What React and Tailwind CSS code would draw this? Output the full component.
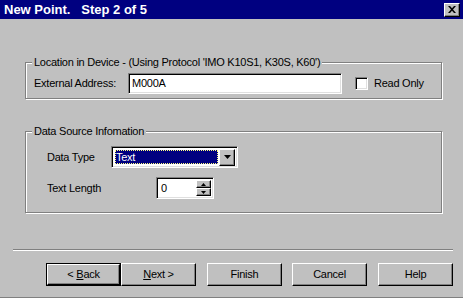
import React from 'react';

const raised =
  'bg-[#c0c0c0] border border-t-white border-l-white border-r-black border-b-black shadow-[inset_-1px_-1px_0_#808080]';
const sunken =
  'border border-t-[#808080] border-l-[#808080] border-r-white border-b-white shadow-[inset_1px_1px_0_#000,inset_-1px_-1px_0_#dfdfdf]';

const DownArrow = ({ small }) => (
  <svg width={small ? 5 : 7} height={small ? 3 : 4} viewBox={small ? '0 0 5 3' : '0 0 7 4'}>
    <path d={small ? 'M0 0h5L2.5 3z' : 'M0 0h7L3.5 4z'} fill="#000" />
  </svg>
);

const UpArrow = () => (
  <svg width="5" height="3" viewBox="0 0 5 3">
    <path d="M0 3h5L2.5 0z" fill="#000" />
  </svg>
);

const WizButton = ({ children, isDefault }) => (
  <div className={`w-[75px] h-[23px] ${isDefault ? 'border border-black' : ''}`}>
    <button className={`w-full h-full flex items-center justify-center ${raised}`}>
      {children}
    </button>
  </div>
);

const Group = ({ title, className, children }) => (
  <fieldset
    className={`border border-[#808080] shadow-[1px_1px_0_#fff,inset_1px_1px_0_#fff] ml-[12px] mr-[11px] ${className}`}
  >
    <legend className="ml-[6px] px-[2px] bg-[#c0c0c0] leading-[14px]">{title}</legend>
    {children}
  </fieldset>
);

export default function App() {
  return (
    <div className="w-[463px] h-[298px] bg-[#c0c0c0] flex flex-col border-b border-[#808080] font-['Liberation_Sans',Arial,sans-serif] text-[11px] tracking-[-0.25px] text-black overflow-hidden">
      {/* Title bar */}
      <div className="h-[19px] shrink-0 bg-[#000080] flex items-center justify-between pl-[4px] pr-[3px]">
        <span className="text-white font-bold text-[13px] tracking-normal whitespace-pre leading-none">New Point.   Step 2 of 5</span>
        <button className={`w-[16px] h-[14px] flex items-center justify-center ${raised}`}>
          <svg width="8" height="7" viewBox="0 0 8 7">
            <path d="M0 0h2l2 2.2L6 0h2L5 3.5 8 7H6L4 4.8 2 7H0l3-3.5z" fill="#000" />
          </svg>
        </button>
      </div>

      <div className="flex-1 flex flex-col pl-[13px] pr-[10px]">
        <Group
          title="Location in Device - (Using Protocol 'IMO K10S1, K30S, K60')"
          className="mt-[36px] h-[44px]"
        >
          <div className="flex items-center pl-[8px] pt-[4px]">
            <span className="w-[94px]">External Address:</span>
            <div className={`w-[214px] h-[21px] bg-white flex items-center px-[3px] ${sunken}`}>M000A</div>
            <div className={`ml-[13px] w-[13px] h-[13px] bg-white ${sunken}`} />
            <span className="ml-[6px]">Read Only</span>
          </div>
        </Group>

        <Group title="Data Source Infomation" className="mt-[25px] h-[89px]">
          <div className="flex flex-col pl-[21px] pt-[8px] gap-[9px]">
            <div className="flex items-center">
              <span className="w-[64px]">Data Type</span>
              <div className={`w-[127px] h-[22px] bg-white flex items-center p-[2px] ${sunken}`}>
                <div className="flex-1 h-full p-[1px]">
                  <div className="h-full bg-[#000080] text-white flex items-center pl-[1px] outline outline-1 outline-dotted outline-[#ffff80] -outline-offset-1">
                    Text
                  </div>
                </div>
                <div className={`w-[16px] h-[17px] flex items-center justify-center ${raised}`}>
                  <DownArrow />
                </div>
              </div>
            </div>
            <div className="flex items-center">
              <span className="w-[109px]">Text Length</span>
              <div className={`w-[58px] h-[22px] bg-white flex items-center p-[2px] ${sunken}`}>
                <span className="flex-1 pl-[2px]">0</span>
                <div className="w-[15px] h-full flex flex-col">
                  <div className={`flex-1 flex items-center justify-center ${raised}`}>
                    <UpArrow />
                  </div>
                  <div className={`flex-1 flex items-center justify-center ${raised}`}>
                    <DownArrow small />
                  </div>
                </div>
              </div>
            </div>
          </div>
        </Group>

        {/* Separator */}
        <div className="mt-[36px] border-t border-[#808080] border-b border-b-white" />

        {/* Buttons */}
        <div className="mt-[12px] flex justify-end">
          <div className="flex">
            <WizButton isDefault>
              &lt; <span className="underline ml-[3px]">B</span>ack
            </WizButton>
            <WizButton>
              <span className="underline">N</span>ext &gt;
            </WizButton>
          </div>
          <div className="ml-[11px]">
            <WizButton>Finish</WizButton>
          </div>
          <div className="ml-[10px]">
            <WizButton>Cancel</WizButton>
          </div>
          <div className="ml-[11px]">
            <WizButton>Help</WizButton>
          </div>
        </div>
      </div>
    </div>
  );
}
